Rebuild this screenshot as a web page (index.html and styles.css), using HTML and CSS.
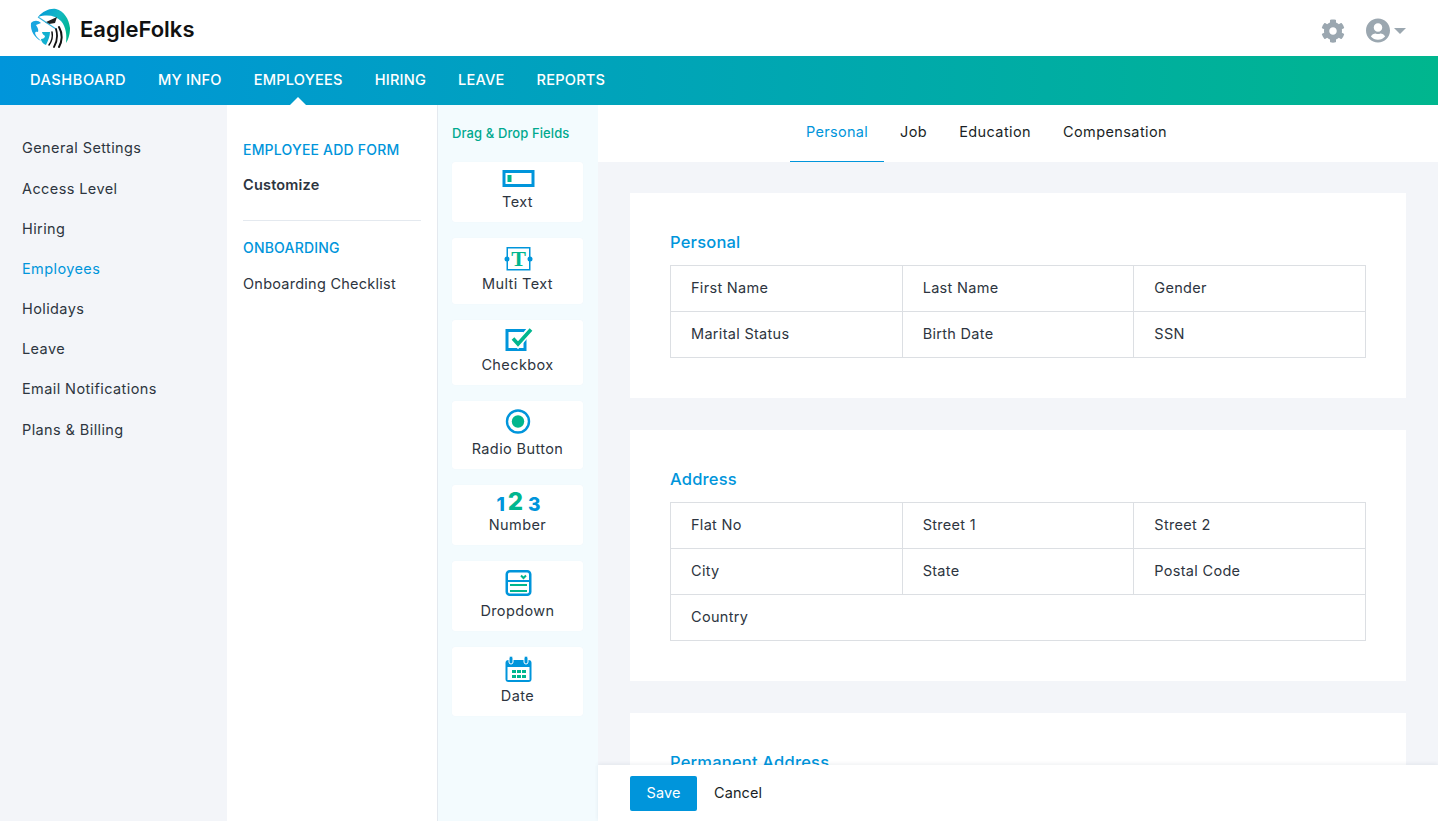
FILE: index.html
```html
<!DOCTYPE html>
<html lang="en">
<head>
<meta charset="utf-8">
<title>EagleFolks</title>
<link rel="stylesheet" href="styles.css">
</head>
<body>
<header class="topbar">
  <div class="brand">
    <svg class="logo" width="40" height="40" viewBox="0 0 40 40">
      <defs>
        <linearGradient id="lg" x1="0" y1="0" x2="1" y2="0.6">
          <stop offset="0" stop-color="#0095db"/>
          <stop offset="0.55" stop-color="#12b8c4"/>
          <stop offset="1" stop-color="#00b68e"/>
        </linearGradient>
      </defs>
      <path fill="url(#lg)" d="M8 9C13 3 20 0 26 1C34 3 39 11 40 20C40 27 38 32 36 35C37 27 36 19 31 13C26 8 18 6 8 9Z"/>
      <path fill="#222" d="M15 14.5L27 9L25 15L19 16Z"/>
      <path fill="none" stroke="#35b4dc" stroke-width="1.2" d="M8 9L20 17L26 21"/>
      <path fill="#18a6e0" d="M1 15C4 12 8 12 11 15L6 17C7 19 9 21 8 24C5 23 4 25 7 29L11 33C5 30 0 23 1 15Z"/>
      <path fill="#12b0d0" d="M12 24L20 24C20 28 18 33 16 37C13 36 11 33 11 31C13 31 15 30 15 28C14 27 12 26 12 24Z"/>
      <g fill="none" stroke="#111" stroke-linecap="round">
        <path stroke-width="1.5" d="M22 24C23 29 22 33 19 37"/>
        <path stroke-width="1.8" d="M26 21C28 28 27 34 24 39"/>
        <path stroke-width="2" d="M29 19C33 26 32 34 29 39"/>
      </g>
    </svg>
    <span class="brand-name">EagleFolks</span>
  </div>
  <div class="top-actions">
    <svg class="cog" width="24" height="24" viewBox="0 0 512 512"><path fill="#9ba7b0" d="M487.4 315.7l-42.6-24.6c4.3-23.2 4.3-47 0-70.2l42.6-24.6c4.9-2.8 7.1-8.6 5.5-14-11.1-35.6-30-67.8-54.7-94.6-3.8-4.1-10-5.1-14.8-2.3L380.8 110c-17.9-15.4-38.5-27.3-60.8-35.1V25.8c0-5.6-3.9-10.5-9.4-11.7-36.7-8.2-74.3-7.8-109.2 0-5.5 1.2-9.4 6.1-9.4 11.7V75c-22.2 7.9-42.8 19.8-60.8 35.1L88.7 85.5c-4.9-2.8-11-1.9-14.8 2.3-24.7 26.7-43.6 58.9-54.7 94.6-1.7 5.4.6 11.2 5.5 14L67.3 221c-4.3 23.2-4.3 47 0 70.2l-42.6 24.6c-4.9 2.8-7.1 8.6-5.5 14 11.1 35.6 30 67.8 54.7 94.6 3.8 4.1 10 5.1 14.8 2.3l42.6-24.6c17.9 15.4 38.5 27.3 60.8 35.1v49.2c0 5.6 3.9 10.5 9.4 11.7 36.7 8.2 74.3 7.8 109.2 0 5.5-1.2 9.4-6.1 9.4-11.7v-49.2c22.2-7.9 42.8-19.8 60.8-35.1l42.6 24.6c4.9 2.8 11 1.9 14.8-2.3 24.7-26.7 43.6-58.9 54.7-94.6 1.5-5.5-.7-11.3-5.6-14.1zM256 336c-44.1 0-80-35.9-80-80s35.9-80 80-80 80 35.9 80 80-35.9 80-80 80z"/></svg>
    <svg class="user" width="24" height="25" viewBox="0 0 496 512"><path fill="#9ba7b0" d="M248 8C111 8 0 119 0 256s111 248 248 248 248-111 248-248S385 8 248 8zm0 96c48.6 0 88 39.4 88 88s-39.4 88-88 88-88-39.4-88-88 39.4-88 88-88zm0 344c-58.7 0-111.3-26.6-146.5-68.2 18.8-35.4 55.6-59.8 98.5-59.8 2.4 0 4.8.4 7.1 1.1 13 4.2 26.6 6.9 40.9 6.9 14.3 0 28-2.7 40.9-6.9 2.3-.7 4.7-1.1 7.1-1.1 42.9 0 79.7 24.4 98.5 59.8C359.3 421.4 306.7 448 248 448z"/></svg>
    <span class="caret"></span>
  </div>
</header>

<nav class="mainnav">
  <a class="wide-label">DASHBOARD</a>
  <a>MY INFO</a>
  <a class="current">EMPLOYEES</a>
  <a>HIRING</a>
  <a>LEAVE</a>
  <a>REPORTS</a>
</nav>

<main class="workspace">
  <aside class="settings">
    <a>General Settings</a>
    <a>Access Level</a>
    <a>Hiring</a>
    <a class="active">Employees</a>
    <a>Holidays</a>
    <a>Leave</a>
    <a>Email Notifications</a>
    <a>Plans &amp; Billing</a>
  </aside>

  <aside class="subnav">
    <h3>EMPLOYEE ADD FORM</h3>
    <a class="strong">Customize</a>
    <hr>
    <h3>ONBOARDING</h3>
    <a class="checklist">Onboarding Checklist</a>
  </aside>

  <aside class="fields">
    <h4>Drag &amp; Drop Fields</h4>
    <div class="field">
      <svg width="60" height="22" viewBox="0 0 60 22"><rect x="16" y="1.5" width="29" height="14" fill="#fff" stroke="#0095db" stroke-width="3"/><rect x="19.5" y="5" width="4" height="7" fill="#00b68e"/></svg>
      <span>Text</span>
    </div>
    <div class="field">
      <svg width="60" height="28" viewBox="0 0 60 28"><rect x="19.25" y="1.75" width="22.5" height="22" fill="#fff" stroke="#0095db" stroke-width="1.5"/><circle cx="19" cy="13" r="2.5" fill="#0095db"/><circle cx="42" cy="13" r="2.5" fill="#0095db"/><text x="30.5" y="20" text-anchor="middle" class="serif-t">T</text></svg>
      <span>Multi Text</span>
    </div>
    <div class="field">
      <svg width="60" height="27" viewBox="0 0 60 27"><rect x="19" y="2.5" width="18" height="19" fill="#fff" stroke="#0095db" stroke-width="3"/><path d="M25 10.5l5 5.5L42 2" fill="none" stroke="#fff" stroke-width="7"/><path d="M25 10.5l5 5.5L43 1.5" fill="none" stroke="#00b68e" stroke-width="3.6"/></svg>
      <span>Checkbox</span>
    </div>
    <div class="field">
      <svg width="60" height="30" viewBox="0 0 60 30"><circle cx="30" cy="12.5" r="11" fill="#fff" stroke="#0095db" stroke-width="2.4"/><circle cx="30" cy="12.5" r="6.2" fill="#00b68e"/></svg>
      <span>Radio Button</span>
    </div>
    <div class="field">
      <div class="digits"><b class="d1">1</b><b class="d2">2</b><b class="d3">3</b></div>
      <span>Number</span>
    </div>
    <div class="field">
      <svg width="60" height="32" viewBox="0 0 60 32"><rect x="18.75" y="2.25" width="23.5" height="23.5" rx="3" fill="#fff" stroke="#0095db" stroke-width="2.5"/><path d="M18 12h25" stroke="#0095db" stroke-width="2"/><path d="M33 6.5l2.5 2.5L38 6.5" fill="none" stroke="#00b68e" stroke-width="2"/><path d="M22 16h17M22 22h17" stroke="#00b68e" stroke-width="2"/></svg>
      <span>Dropdown</span>
    </div>
    <div class="field">
      <svg width="60" height="31" viewBox="0 0 60 31"><rect x="17.5" y="5" width="26" height="22" rx="3" fill="#0095db"/><rect x="19.5" y="12" width="22" height="13" fill="#fff"/><rect x="21" y="1" width="4" height="8" rx="2" fill="#0095db" stroke="#fff" stroke-width="1"/><rect x="36" y="1" width="4" height="8" rx="2" fill="#0095db" stroke="#fff" stroke-width="1"/><path d="M24 15h4v3h-4zM29 15h4v3h-4zM34 15h4v3h-4zM24 20h4v3h-4zM29 20h4v3h-4zM34 20h4v3h-4z" fill="#00b68e"/></svg>
      <span>Date</span>
    </div>
  </aside>

  <section class="editor">
    <div class="tabs">
      <a class="active">Personal</a>
      <a>Job</a>
      <a>Education</a>
      <a>Compensation</a>
    </div>
    <div class="sections">
      <div class="card">
        <h2>Personal</h2>
        <div class="grid">
          <div>First Name</div><div>Last Name</div><div>Gender</div>
          <div>Marital Status</div><div>Birth Date</div><div>SSN</div>
        </div>
      </div>
      <div class="card">
        <h2>Address</h2>
        <div class="grid">
          <div>Flat No</div><div>Street 1</div><div>Street 2</div>
          <div>City</div><div>State</div><div>Postal Code</div>
          <div class="wide">Country</div>
        </div>
      </div>
      <div class="card">
        <h2>Permanent Address</h2>
      </div>
    </div>
    <footer class="actions">
      <button class="save" type="button">Save</button>
      <button class="cancel" type="button">Cancel</button>
    </footer>
  </section>
</main>
</body>
</html>
```
FILE: styles.css
```css
* { box-sizing: border-box; }
html, body { height: 100%; }
body {
  margin: 0;
  height: 821px;
  overflow: hidden;
  display: flex;
  flex-direction: column;
  font-family: Inter, "Noto Sans", sans-serif;
  font-size: 14.5px;
  color: #2d3540;
  background: #fff;
}
a { display: block; }

.topbar {
  height: 56px;
  flex: none;
  display: flex;
  align-items: center;
  justify-content: space-between;
  padding: 0 32px 0 30px;
  background: #fff;
}
.brand { display: flex; align-items: center; gap: 10px; }
.brand-name { font-size: 22px; font-weight: 600; color: #111; padding-top: 2px; }
.logo { display: block; }
.top-actions { display: flex; align-items: center; padding-top: 5px; }
.cog { display: block; margin-right: 21px; }
.user { display: block; margin-right: 4px; }
.caret {
  width: 0; height: 0;
  border-left: 6px solid transparent;
  border-right: 6px solid transparent;
  border-top: 6px solid #9ba7b0;
}

.mainnav {
  height: 49px;
  flex: none;
  display: flex;
  gap: 32px;
  padding-left: 30px;
  background: linear-gradient(90deg, #0095db 0%, #00b68e 100%);
}
.mainnav a {
  position: relative;
  color: #fff;
  font-size: 14.6px;
  font-weight: 500;
  line-height: 48px;
  letter-spacing: 0.2px;
}
.mainnav a.wide-label { letter-spacing: 0.55px; }
.mainnav a.current::after {
  content: "";
  position: absolute;
  left: 50%;
  bottom: 0;
  margin-left: -8px;
  border-left: 8px solid transparent;
  border-right: 8px solid transparent;
  border-bottom: 8px solid #fff;
}

.workspace { flex: 1; min-height: 0; display: flex; }

.settings {
  width: 227px;
  flex: none;
  background: #f3f5f9;
  padding: 33.35px 0 0 22px;
  display: flex;
  flex-direction: column;
  gap: 20.2px;
}
.settings a { line-height: 20px; letter-spacing: 0.4px; color: #2d3540; }
.settings a.active { color: #0095db; }

.subnav {
  width: 211px;
  flex: none;
  padding: 35px 16px 0;
  border-right: 1px solid #e4e9ef;
  background: #fff;
}
.subnav h3 { margin: 0; font-size: 14px; line-height: 20px; font-weight: 500; color: #0095db; letter-spacing: 0.2px; }
.subnav a { margin-top: 15px; line-height: 20px; letter-spacing: 0.25px; }
.subnav a.strong { font-weight: 600; letter-spacing: 0.2px; }
.subnav a.checklist { margin-top: 16px; }
.subnav hr { border: 0; border-top: 1px solid #e4e9ef; margin: 25px 0 17px; }

.fields {
  width: 160px;
  flex: none;
  padding: 19px 15px 0 14px;
  background: #f3fbfe;
}
.fields h4 { margin: 0 0 20px; font-size: 13px; line-height: 18px; font-weight: 500; color: #00a98f; letter-spacing: 0.1px; }
.field {
  background: #fff;
  border-radius: 3px;
  box-shadow: 0 0 1px rgba(0, 60, 110, .06);
  margin-bottom: 16px;
  padding: 8px 0 10px;
  text-align: center;
  width: 131px;
}
.field svg { display: block; margin: 0 auto; }
.field span { display: block; line-height: 20px; letter-spacing: 0.4px; }
.serif-t { font-family: "Liberation Serif", serif; font-weight: 700; font-size: 22px; fill: #00b68e; }
.digits { height: 22px; display: flex; justify-content: center; align-items: flex-end; gap: 5px; line-height: 1; padding: 0 0 1px 2px; }
.digits b { display: block; font-weight: 800; }
.d1, .d3 { color: #0095db; font-size: 19px; }
.d1 { margin-right: -2px; }
.d2 { color: #00b68e; font-size: 24px; }

.editor {
  flex: 1;
  min-width: 0;
  display: flex;
  flex-direction: column;
  background: #f3f5f9;
}
.tabs {
  height: 57px;
  flex: none;
  display: flex;
  background: #fff;
  padding-left: 192px;
}
.tabs a { padding: 0 16px; line-height: 54px; height: 57px; color: #1a1f26; letter-spacing: 0.4px; }
.tabs a.active { color: #0095db; border-bottom: 1px solid #0095db; letter-spacing: 0.3px; }

.sections {
  flex: 1;
  min-height: 0;
  overflow: hidden;
  padding: 31px 32px 0;
  display: flex;
  flex-direction: column;
  gap: 32px;
}
.card { background: #fff; padding: 40px; flex: none; }
.card h2 { margin: 0 0 14px; font-size: 16.5px; line-height: 18px; font-weight: 500; color: #0095db; letter-spacing: 0.2px; }
.grid {
  display: grid;
  grid-template-columns: repeat(3, 1fr);
  border-top: 1px solid #dcdfe3;
  border-left: 1px solid #dcdfe3;
}
.grid div {
  height: 46px;
  line-height: 44px;
  padding-left: 20px;
  border-right: 1px solid #dcdfe3;
  border-bottom: 1px solid #dcdfe3;
  color: #2d3540;
  letter-spacing: 0.3px;
}
.grid .wide { grid-column: 1 / -1; }

.actions {
  height: 56px;
  flex: none;
  display: flex;
  align-items: center;
  padding-left: 32px;
  background: #fff;
  box-shadow: 0 -1px 4px rgba(30, 50, 80, .08);
  position: relative;
}
button { font: inherit; border: 0; cursor: pointer; }
.save { width: 67px; height: 35px; padding: 0 0 2px; border-radius: 2px; background: #0095db; color: #fff; letter-spacing: 0.1px; }
.cancel { background: none; margin-left: 17px; padding: 0 0 2px; color: #1a1f26; letter-spacing: 0.1px; }
```
